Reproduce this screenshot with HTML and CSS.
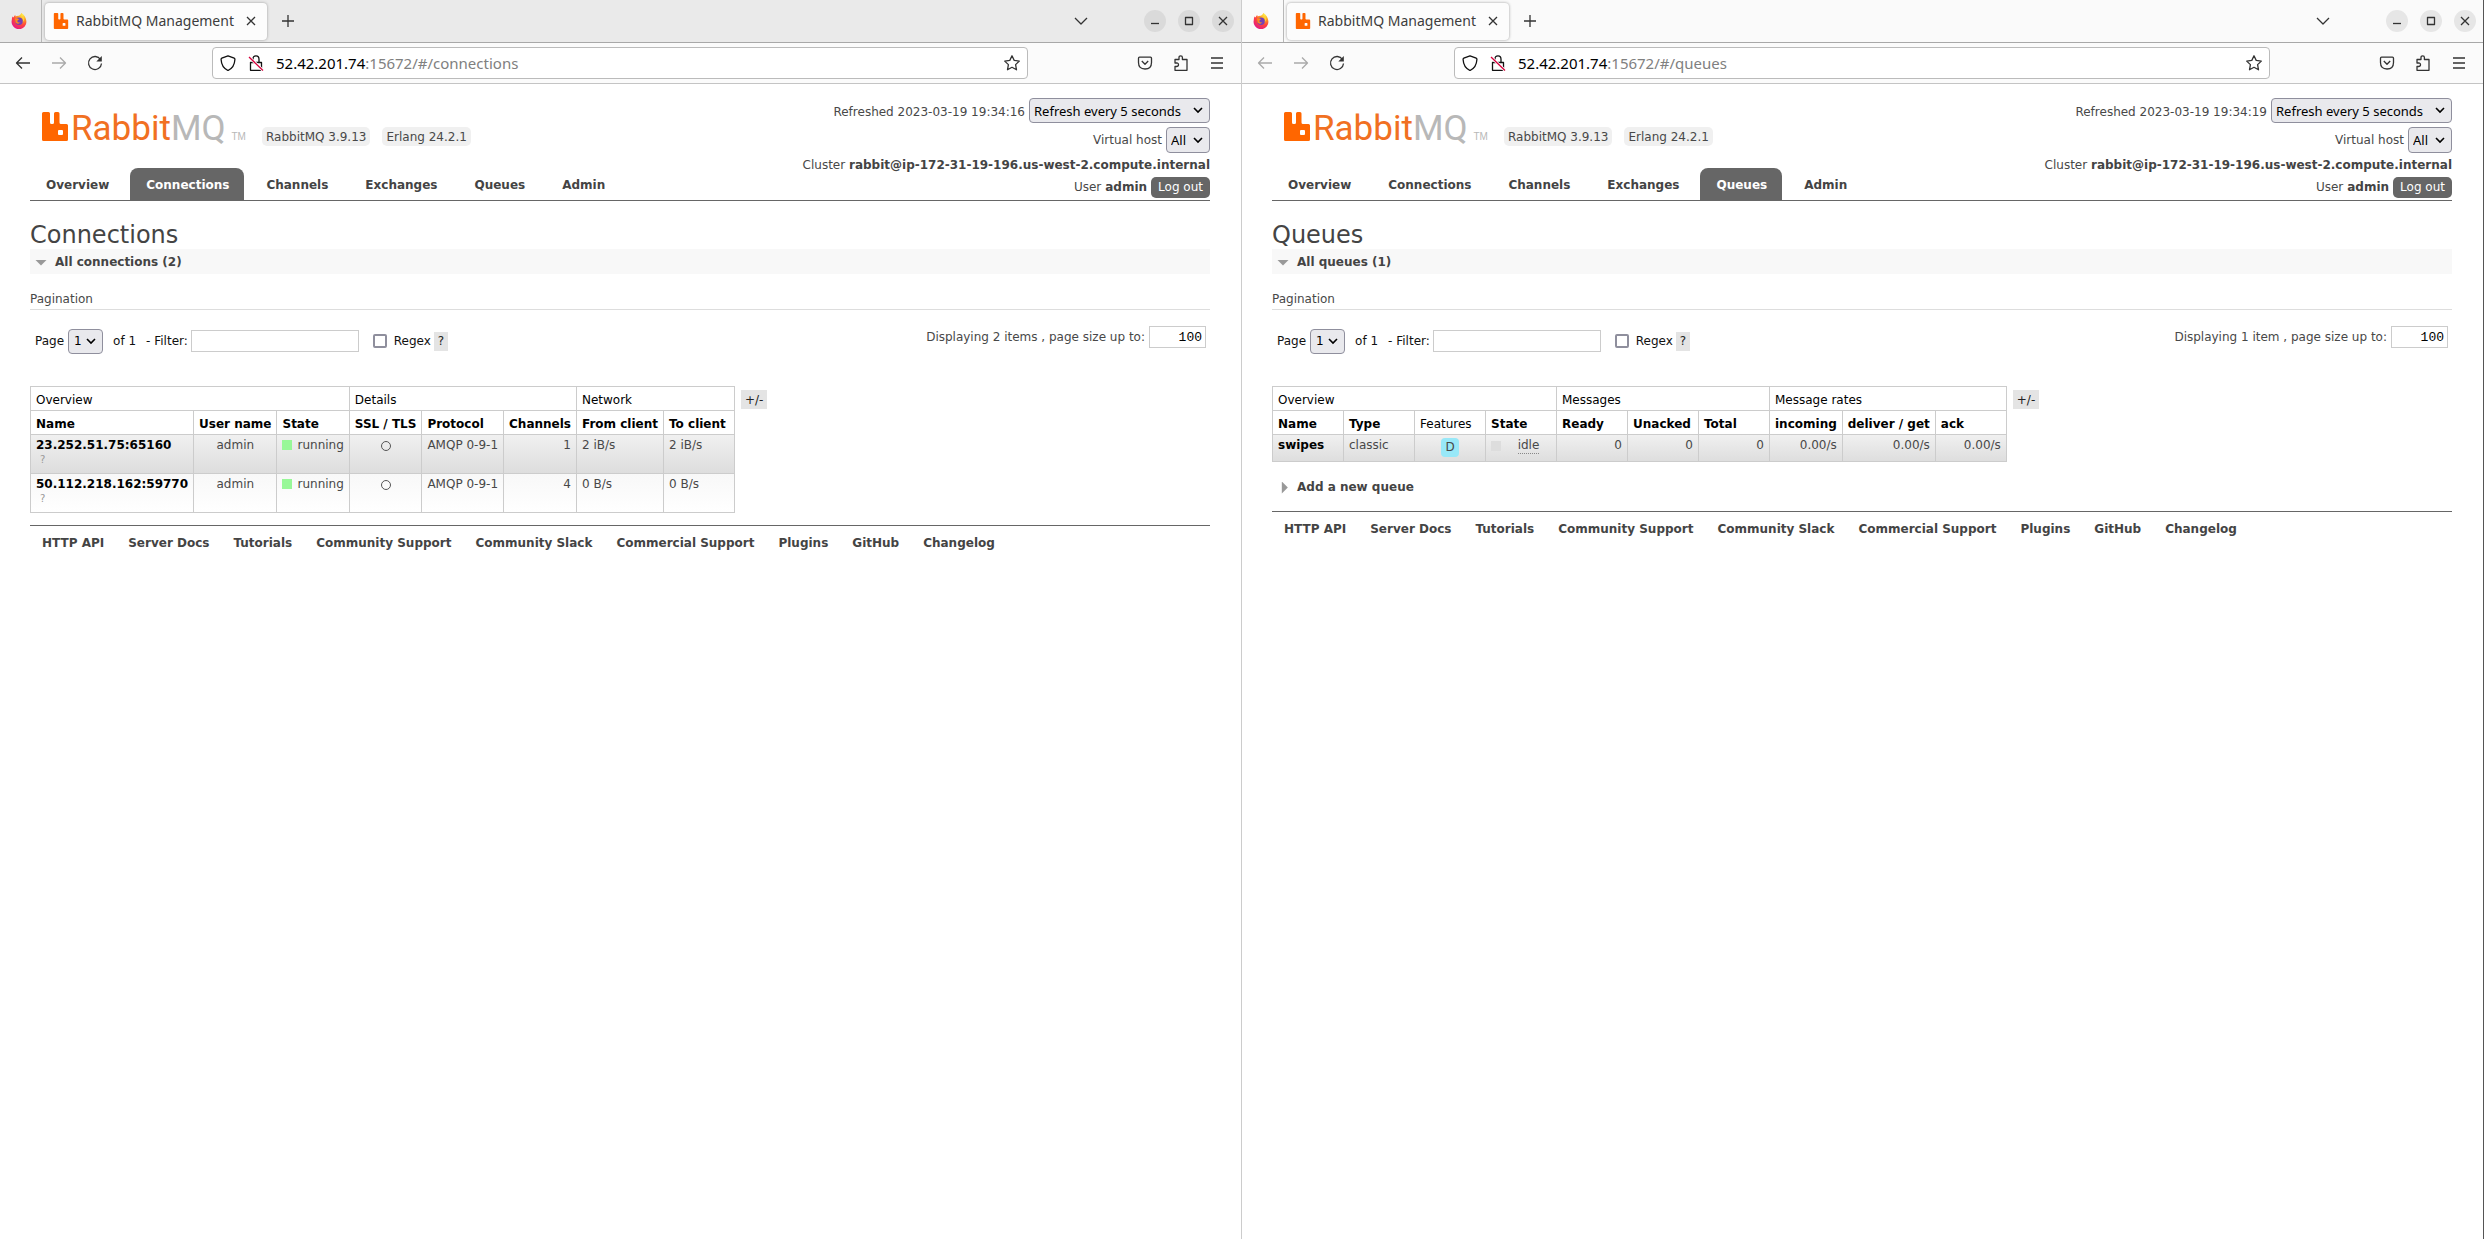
FILE: index.html
```html
<!DOCTYPE html>
<html lang="en">
<head>
<meta charset="utf-8">
<title>RabbitMQ Management</title>
<link rel="stylesheet" href="styles.css">
</head>
<body>
<svg class="defs" aria-hidden="true">
  <defs>
    <radialGradient id="fox" cx="0.75" cy="0.1" r="1">
      <stop offset="0" stop-color="#fff04a"/><stop offset="0.35" stop-color="#ff9a1f"/><stop offset="0.65" stop-color="#ff4040"/><stop offset="1" stop-color="#e0168c"/>
    </radialGradient>
    <symbol id="firefox" viewBox="0 0 16 16">
      <path d="M1.6 3.6 2.6 4.6Q3.2 2.6 4.2 2L4.6 3.6Q6 2.6 8 2.8 9.8 1.8 10.4 0 14.6 3 15.2 7.2A7.4 7.4 0 1 1 .8 7Q.8 5 1.600 3.600Z" fill="url(#fox)"/>
      <circle cx="8" cy="8.200" r="3.800" fill="#7440b8"/>
      <path d="M4 5.500Q6.500 4.600 8.200 6.600 6.500 6.900 6.300 8.200 7 10.200 9.500 9.300 7.500 12 4.500 9.500Z" fill="#ff8a1a"/>
      <path d="M10.200 3.500Q13 6 11.600 9.500 14 7 13 4.200Z" fill="#ffd23a"/>
    </symbol>
    <symbol id="mark" viewBox="0 0 26 29">
      <path d="M1.500 0H6.500Q8 0 8 1.500V10.500Q8 12 9.500 12H10.500Q12 12 12 10.500V1.500Q12 0 13.500 0H16Q17.500 0 17.500 1.500V10.500Q17.500 12 19 12H24.500Q26 12 26 13.500V27.500Q26 29 24.500 29H1.500Q0 29 0 27.500V1.500Q0 0 1.500 0ZM17 18Q16 18 16 19V22Q16 23 17 23H20Q21 23 21 22V19Q21 18 20 18Z" fill="#f60"/>
    </symbol>
    <symbol id="close" viewBox="0 0 16 16"><path d="M4 4 12 12M12 4 4 12"/></symbol>
    <symbol id="plus" viewBox="0 0 16 16"><path d="M8 2V14M2 8H14"/></symbol>
    <symbol id="chevron" viewBox="0 0 16 16"><path d="M2 5 8 11 14 5"/></symbol>
    <symbol id="min" viewBox="0 0 16 16"><path d="M4 10.500H12"/></symbol>
    <symbol id="max" viewBox="0 0 16 16"><path d="M4.500 4.500H11.500V11.500H4.500Z"/></symbol>
    <symbol id="back" viewBox="0 0 16 16"><path d="M15 8H1.500M7 2.500 1.500 8 7 13.500"/></symbol>
    <symbol id="forward" viewBox="0 0 16 16"><path d="M1 8H14.500M9 2.500 14.500 8 9 13.500"/></symbol>
    <symbol id="reload" viewBox="0 0 16 16"><path d="M13.500 4.500A6.500 6.500 0 1 0 14.500 8.500"/><path d="M14.800 1V6.500H9.300Z" class="solid"/></symbol>
    <symbol id="shield" viewBox="0 0 16 16"><path d="M8 .8 14.200 3.200Q15 3.500 14.900 4.500 14.500 12.500 8 15.500 1.500 12.500 1.100 4.500 1 3.500 1.800 3.200Z"/></symbol>
    <symbol id="lock" viewBox="0 0 16 16"><path d="M2.500 7.500H13.500V15.300H2.500ZM5 7.500V4.200Q5 .8 8 .8T11 4.200V7.500"/><path d="M1 2 15 15.500" class="slash-bg"/><path d="M1 2 15 15.500" class="slash"/></symbol>
    <symbol id="star" viewBox="0 0 16 16"><path d="M8 .8 10.200 5.400 15.300 6.100 11.600 9.600 12.500 14.800 8 12.300 3.500 14.800 4.400 9.600 .7 6.100 5.800 5.400Z"/></symbol>
    <symbol id="pocket" viewBox="0 0 16 16"><path d="M2.500 2.200H13.500Q14.500 2.200 14.500 3.200V7.500Q14.500 14 8 14T1.500 7.500V3.200Q1.500 2.200 2.500 2.200ZM4.800 6 8 9.200 11.200 6"/></symbol>
    <symbol id="puzzle" viewBox="0 0 16 16"><path d="M2 4.500H6V2.500Q6 .8 7.700 .8T9.400 2.500V4.500H14V15.300H2V11.500H3.500Q5.500 11.500 5.500 9.700T3.500 8H2Z"/></symbol>
    <symbol id="menu" viewBox="0 0 16 16"><path d="M2 3H14M2 8H14M2 13H14"/></symbol>
  </defs>
</svg>
<main class="desktop">

<section class="window window-back">
  <header class="tabstrip">
    <span class="pinned"><svg class="ico"><use href="#firefox"/></svg></span>
    <div class="browser-tab"><svg class="ico"><use href="#mark"/></svg><span>RabbitMQ Management</span><button class="bare" aria-label="Close tab"><svg class="ico"><use href="#close"/></svg></button></div>
    <button class="bare new-tab" aria-label="New tab"><svg class="ico"><use href="#plus"/></svg></button>
    <button class="bare list-tabs" aria-label="List tabs"><svg class="ico"><use href="#chevron"/></svg></button>
    <div class="win-buttons">
      <button aria-label="Minimize"><svg class="ico"><use href="#min"/></svg></button>
      <button aria-label="Maximize"><svg class="ico"><use href="#max"/></svg></button>
      <button aria-label="Close"><svg class="ico"><use href="#close"/></svg></button>
    </div>
  </header>
  <div class="toolbar">
    <div class="nav-buttons">
      <button class="bare" aria-label="Back"><svg class="ico"><use href="#back"/></svg></button>
      <button class="bare dim" aria-label="Forward"><svg class="ico"><use href="#forward"/></svg></button>
      <button class="bare" aria-label="Reload"><svg class="ico"><use href="#reload"/></svg></button>
    </div>
    <div class="urlbar">
      <svg class="ico"><use href="#shield"/></svg>
      <svg class="ico"><use href="#lock"/></svg>
      <div class="address" role="textbox" aria-label="Address" contenteditable="true" spellcheck="false"><span class="host">52.42.201.74</span>:15672/#/connections</div>
      <button class="bare" aria-label="Bookmark"><svg class="ico"><use href="#star"/></svg></button>
    </div>
    <div class="tool-buttons">
      <button class="bare" aria-label="Pocket"><svg class="ico"><use href="#pocket"/></svg></button>
      <button class="bare" aria-label="Extensions"><svg class="ico"><use href="#puzzle"/></svg></button>
      <button class="bare" aria-label="Menu"><svg class="ico"><use href="#menu"/></svg></button>
    </div>
  </div>
  <div class="page">
    <header class="top">
      <div class="brand">
        <a class="logo" href="#/"><svg class="logo-mark"><use href="#mark"/></svg><span class="rabbit">Rabbit</span><span class="mq">MQ</span><span class="tm">TM</span></a>
        <span class="version">RabbitMQ 3.9.13</span><span class="version">Erlang 24.2.1</span>
      </div>
      <nav class="tabs">
        <a href="#/">Overview</a><a href="#/connections" class="selected">Connections</a><a href="#/channels">Channels</a><a href="#/exchanges">Exchanges</a><a href="#/queues">Queues</a><a href="#/users">Admin</a>
      </nav>
      <div class="login">
        <label>Refreshed 2023-03-19 19:34:16 <select class="refresh"><option>Refresh every 5 seconds</option></select></label>
        <label>Virtual host <select class="vhost"><option>All</option></select></label>
        <div class="cluster">Cluster <b>rabbit@ip-172-31-19-196.us-west-2.compute.internal</b></div>
        <div class="user">User <b>admin</b> <button class="logout">Log out</button></div>
      </div>
    </header>
    <h1>Connections</h1>
    <h2 class="open">All connections (2)</h2>
    <h3>Pagination</h3>
    <div class="filters">
      <label class="pager">Page <select><option>1</option></select></label>
      <span class="of">of 1</span>
      <label class="filter"><span>- Filter:</span> <input type="text"></label>
      <label class="regex"><input type="checkbox"> Regex</label>
      <button class="chip">?</button>
      <label class="size">Displaying 2 items , page size up to: <input type="text" value="100"></label>
    </div>
    <div class="listing">
      <table>
        <thead>
          <tr><th colspan="3">Overview</th><th colspan="3">Details</th><th colspan="2">Network</th></tr>
          <tr class="cols"><th>Name</th><th>User name</th><th>State</th><th>SSL / TLS</th><th>Protocol</th><th>Channels</th><th>From client</th><th>To client</th></tr>
        </thead>
        <tbody>
          <tr class="shade tall"><td><a href="#/connections/1">23.252.51.75:65160</a><small>?</small></td><td class="c">admin</td><td><i class="dot green"></i>running</td><td class="c"><i class="ring"></i></td><td>AMQP 0-9-1</td><td class="r">1</td><td>2 iB/s</td><td>2 iB/s</td></tr>
          <tr class="light tall"><td><a href="#/connections/2">50.112.218.162:59770</a><small>?</small></td><td class="c">admin</td><td><i class="dot green"></i>running</td><td class="c"><i class="ring"></i></td><td>AMQP 0-9-1</td><td class="r">4</td><td>0 B/s</td><td>0 B/s</td></tr>
        </tbody>
      </table>
      <button class="chip">+/-</button>
    </div>
    <footer>
      <a href="#http">HTTP API</a><a href="#docs">Server Docs</a><a href="#tutorials">Tutorials</a><a href="#support">Community Support</a><a href="#slack">Community Slack</a><a href="#commercial">Commercial Support</a><a href="#plugins">Plugins</a><a href="#github">GitHub</a><a href="#changelog">Changelog</a>
    </footer>
  </div>
</section>

<section class="window window-front">
  <header class="tabstrip">
    <span class="pinned"><svg class="ico"><use href="#firefox"/></svg></span>
    <div class="browser-tab"><svg class="ico"><use href="#mark"/></svg><span>RabbitMQ Management</span><button class="bare" aria-label="Close tab"><svg class="ico"><use href="#close"/></svg></button></div>
    <button class="bare new-tab" aria-label="New tab"><svg class="ico"><use href="#plus"/></svg></button>
    <button class="bare list-tabs" aria-label="List tabs"><svg class="ico"><use href="#chevron"/></svg></button>
    <div class="win-buttons">
      <button aria-label="Minimize"><svg class="ico"><use href="#min"/></svg></button>
      <button aria-label="Maximize"><svg class="ico"><use href="#max"/></svg></button>
      <button aria-label="Close"><svg class="ico"><use href="#close"/></svg></button>
    </div>
  </header>
  <div class="toolbar">
    <div class="nav-buttons">
      <button class="bare dim" aria-label="Back"><svg class="ico"><use href="#back"/></svg></button>
      <button class="bare dim" aria-label="Forward"><svg class="ico"><use href="#forward"/></svg></button>
      <button class="bare" aria-label="Reload"><svg class="ico"><use href="#reload"/></svg></button>
    </div>
    <div class="urlbar">
      <svg class="ico"><use href="#shield"/></svg>
      <svg class="ico"><use href="#lock"/></svg>
      <div class="address" role="textbox" aria-label="Address" contenteditable="true" spellcheck="false"><span class="host">52.42.201.74</span>:15672/#/queues</div>
      <button class="bare" aria-label="Bookmark"><svg class="ico"><use href="#star"/></svg></button>
    </div>
    <div class="tool-buttons">
      <button class="bare" aria-label="Pocket"><svg class="ico"><use href="#pocket"/></svg></button>
      <button class="bare" aria-label="Extensions"><svg class="ico"><use href="#puzzle"/></svg></button>
      <button class="bare" aria-label="Menu"><svg class="ico"><use href="#menu"/></svg></button>
    </div>
  </div>
  <div class="page">
    <header class="top">
      <div class="brand">
        <a class="logo" href="#/"><svg class="logo-mark"><use href="#mark"/></svg><span class="rabbit">Rabbit</span><span class="mq">MQ</span><span class="tm">TM</span></a>
        <span class="version">RabbitMQ 3.9.13</span><span class="version">Erlang 24.2.1</span>
      </div>
      <nav class="tabs">
        <a href="#/">Overview</a><a href="#/connections">Connections</a><a href="#/channels">Channels</a><a href="#/exchanges">Exchanges</a><a href="#/queues" class="selected">Queues</a><a href="#/users">Admin</a>
      </nav>
      <div class="login">
        <label>Refreshed 2023-03-19 19:34:19 <select class="refresh"><option>Refresh every 5 seconds</option></select></label>
        <label>Virtual host <select class="vhost"><option>All</option></select></label>
        <div class="cluster">Cluster <b>rabbit@ip-172-31-19-196.us-west-2.compute.internal</b></div>
        <div class="user">User <b>admin</b> <button class="logout">Log out</button></div>
      </div>
    </header>
    <h1>Queues</h1>
    <h2 class="open">All queues (1)</h2>
    <h3>Pagination</h3>
    <div class="filters">
      <label class="pager">Page <select><option>1</option></select></label>
      <span class="of">of 1</span>
      <label class="filter"><span>- Filter:</span> <input type="text"></label>
      <label class="regex"><input type="checkbox"> Regex</label>
      <button class="chip">?</button>
      <label class="size">Displaying 1 item , page size up to: <input type="text" value="100"></label>
    </div>
    <div class="listing">
      <table>
        <thead>
          <tr><th colspan="4">Overview</th><th colspan="3">Messages</th><th colspan="3">Message rates</th></tr>
          <tr class="cols"><th>Name</th><th>Type</th><th class="plain">Features</th><th>State</th><th>Ready</th><th>Unacked</th><th>Total</th><th>incoming</th><th>deliver / get</th><th>ack</th></tr>
        </thead>
        <tbody>
          <tr class="shade short"><td><a href="#/queues/swipes">swipes</a></td><td>classic</td><td class="c"><span class="feature">D</span></td><td><div class="status"><i class="dot gray"></i><abbr title="Idle">idle</abbr></div></td><td class="r">0</td><td class="r">0</td><td class="r">0</td><td class="r">0.00/s</td><td class="r">0.00/s</td><td class="r">0.00/s</td></tr>
        </tbody>
      </table>
      <button class="chip">+/-</button>
    </div>
    <h2 class="closed">Add a new queue</h2>
    <footer>
      <a href="#http">HTTP API</a><a href="#docs">Server Docs</a><a href="#tutorials">Tutorials</a><a href="#support">Community Support</a><a href="#slack">Community Slack</a><a href="#commercial">Commercial Support</a><a href="#plugins">Plugins</a><a href="#github">GitHub</a><a href="#changelog">Changelog</a>
    </footer>
  </div>
</section>

</main>
</body>
</html>
```

FILE: styles.css
```css
* { box-sizing: border-box; }
body { margin: 0; background: #fff; color: #484848; font: 12px/15px "DejaVu Sans", Verdana, sans-serif; }
a { color: inherit; text-decoration: none; }
button, input, select { font: inherit; color: inherit; margin: 0; }
.defs { position: absolute; width: 0; height: 0; }
.desktop { display: grid; grid-template-columns: 1fr 1fr; min-height: 100vh; }
.window { min-width: 0; border-right: 1px solid #ccc; }
.window-front { border-right-color: #555; }

/* Browser chrome */
.ico { display: block; width: 16px; height: 16px; flex: none; fill: none; stroke: currentColor; stroke-width: 1.3; stroke-linejoin: round; }
#firefox, #mark { stroke: none; }
.solid { fill: currentColor; stroke: none; }
.slash-bg { stroke: #fff; stroke-width: 3; }
.slash { stroke: #d7003c; }
.bare { display: block; padding: 0; border: 0; background: none; color: #333; }
.dim { color: #aaa; }
.tabstrip { display: flex; align-items: center; height: 43px; padding-right: 7px; border-bottom: 1px solid #a8a8a8; background: #fafafa; font: 14px/20px "Noto Sans", sans-serif; }
.window-back .tabstrip { background: #eaeaea; }
.pinned { display: flex; align-items: center; align-self: stretch; width: 42px; padding-left: 11px; border-right: 1px solid #b8b8b8; }
.browser-tab { display: flex; align-items: center; gap: 7px; width: 222px; height: 37px; margin: 0 13px 0 3px; padding: 0 8px; border-radius: 4px; background: #fcfcfc; box-shadow: 0 0 3px #999; color: #3d3d3d; }
.browser-tab span { flex: 1; min-width: 0; white-space: nowrap; }
.list-tabs { margin-left: auto; }
.win-buttons { display: flex; gap: 12px; margin-left: 55px; }
.win-buttons button { display: grid; place-items: center; width: 22px; height: 22px; padding: 0; border: 0; border-radius: 50%; background: #e6e6e6; color: #333; }
.window-back .win-buttons button { background: #dadada; }
.toolbar { display: flex; align-items: center; height: 41px; padding: 0 16px 1px 15px; border-bottom: 1px solid #c4c4c4; background: #fbfbfb; }
.nav-buttons, .tool-buttons { display: flex; gap: 20px; }
.urlbar { display: flex; align-items: center; gap: 12px; flex: 1; height: 32px; margin: 0 109px; padding: 0 7px; border: 1px solid #bbb; border-radius: 4px; background: #fff; color: #111; }
.address { flex: 1; color: #808080; font: 15px/20px "Noto Sans", sans-serif; white-space: nowrap; }
.host { color: #000; }

/* Management page */
.page { padding: 14px 31px 0 30px; }
.top { display: grid; grid-template-columns: auto auto; grid-template-rows: 1fr 32px; justify-content: space-between; border-bottom: 1px solid #666; }
.brand { display: flex; align-items: flex-end; gap: 12px; padding: 0 0 22px 12px; }
.logo { display: flex; align-items: flex-end; height: 34px; margin-right: 4px; font: 35px/34px Roboto, "Liberation Sans", sans-serif; }
.logo-mark { width: 26px; height: 29px; margin: 0 3px 5px 0; }
.rabbit { color: #f17022; }
.mq { color: #b8b8b8; }
.tm { margin-left: 6px; color: #b8b8b8; font: 10px/18px "Liberation Sans", sans-serif; }
.version { padding: 3px 4px 1px; border-radius: 5px; background: #f0f0f0; }
.tabs { grid-row: 2; grid-column: 1; display: flex; gap: 6px; font-weight: bold; color: #444; }
.tabs a { padding: 10px 15px 7px 16px; border-radius: 8px 8px 0 0; }
.tabs .selected { background: #666; color: #fff; }
.login { grid-column: 2; grid-row: 1 / 3; display: flex; flex-direction: column; align-items: flex-end; padding-bottom: 2px; }
.login label { display: flex; align-items: center; gap: 4px; }
.login .cluster { line-height: 24px; }
.user { display: flex; align-items: center; gap: 4px; }
.logout { height: 21px; padding: 0 7px; border: 0; border-radius: 5px; background: #666; color: #fff; }
b { color: #444; }
select { appearance: none; height: 25px; padding: 0 22px 0 4px; border: 1px solid #8f8f9d; border-radius: 4px; background: #e9e9ed url("data:image/svg+xml,%3Csvg xmlns='http://www.w3.org/2000/svg' width='10' height='7'%3E%3Cpath d='M1 1 5 5 9 1' fill='none' stroke='%23000' stroke-width='1.6'/%3E%3C/svg%3E") no-repeat right 6px center; color: #000; font: 13px/20px "Noto Sans", sans-serif; }
.refresh { width: 181px; margin-bottom: 4px; }
.vhost { height: 26px; }
h1 { margin: 20px 0 0; color: #444; font-size: 24px; line-height: 28px; font-weight: normal; }
h2 { display: flex; align-items: center; gap: 8px; margin: 0; padding: 6px 5px 4px; font-size: 12px; line-height: 15px; color: #444; }
h2::before { content: ""; width: 12px; background: #999; }
.open { background: #f8f8f8; }
.open::before { height: 6px; clip-path: polygon(0 0, 100% 0, 50% 100%); }
.closed { margin-top: 12px; }
.closed::before { height: 12px; clip-path: polygon(40% 0, 90% 50%, 40% 100%); }
h3 { margin: 18px 0 0; padding-bottom: 2px; border-bottom: 1px solid #ddd; font-size: 12px; line-height: 15px; font-weight: normal; }
.filters { display: flex; align-items: center; margin: 18px 4px 33px 5px; height: 26px; margin-bottom: 32px; color: #111; }
.filters label { display: flex; align-items: center; gap: 4px; }
.pager select { width: 35px; padding-left: 5px; padding-right: 0; font-family: "DejaVu Sans", sans-serif; font-size: 12px; }
.of { margin: 0 10px; }
.filters input[type="text"] { height: 22px; border: 1px solid #ccc; background: #fff; }
.filters .filter { gap: 3px; }
.filter input { width: 168px; }
.filters .regex { margin: 0 3px 0 14px; gap: 7px; }
.regex input { appearance: none; width: 14px; height: 14px; border: 2px solid #8f8f9d; border-radius: 2px; background: #fff; }
.filters .size { align-self: flex-start; margin: -2px 0 0 auto; color: #484848; }
.size input { width: 57px; padding: 0 3px; color: #000; font: 13px/18px "Liberation Mono", monospace; text-align: right; }
.chip { height: 19px; padding: 1px 4px 0; border: 0; background: #e4e4e4; color: #222; }
.listing { display: flex; align-items: flex-start; gap: 6px; }
.listing .chip { margin-top: 4px; }
table { border-collapse: collapse; }
th, td { border: 1px solid #ccc; text-align: left; vertical-align: top; white-space: nowrap; }
th { padding: 6px 5px 2px; color: #000; font-weight: normal; }
.cols th { min-width: 71px; font-weight: bold; }
.cols .plain { font-weight: normal; }
td { padding: 3px 5px 1px; }
td a { color: #000; font-weight: bold; }
.tall { height: 39px; }
.short { height: 27px; }
.shade { background: linear-gradient(#f0f0f0, #ddd); }
.light { background: linear-gradient(#f8f8f8, #fff); }
small { display: block; padding-left: 4px; color: #999; font-size: 10px; line-height: 14px; }
.c { text-align: center; }
.r { text-align: right; }
.dot { display: inline-block; width: 10px; height: 10px; margin-right: 5px; vertical-align: -1px; }
.green { background: #98f898; }
.gray { background: #ddd; }
.ring { display: inline-block; width: 10px; height: 10px; border: 1px solid #555; border-radius: 50%; vertical-align: -2px; }
.feature { display: inline-block; padding: 2px 4px; border-radius: 4px; background: #98e8f8; }
.status { display: flex; align-items: center; }
.status abbr { margin: 0 auto; border-bottom: 1px dotted #888; text-decoration: none; }
footer { display: flex; gap: 24px; margin-top: 12px; padding: 10px 12px; border-top: 1px solid #666; color: #444; font-weight: bold; }
```
